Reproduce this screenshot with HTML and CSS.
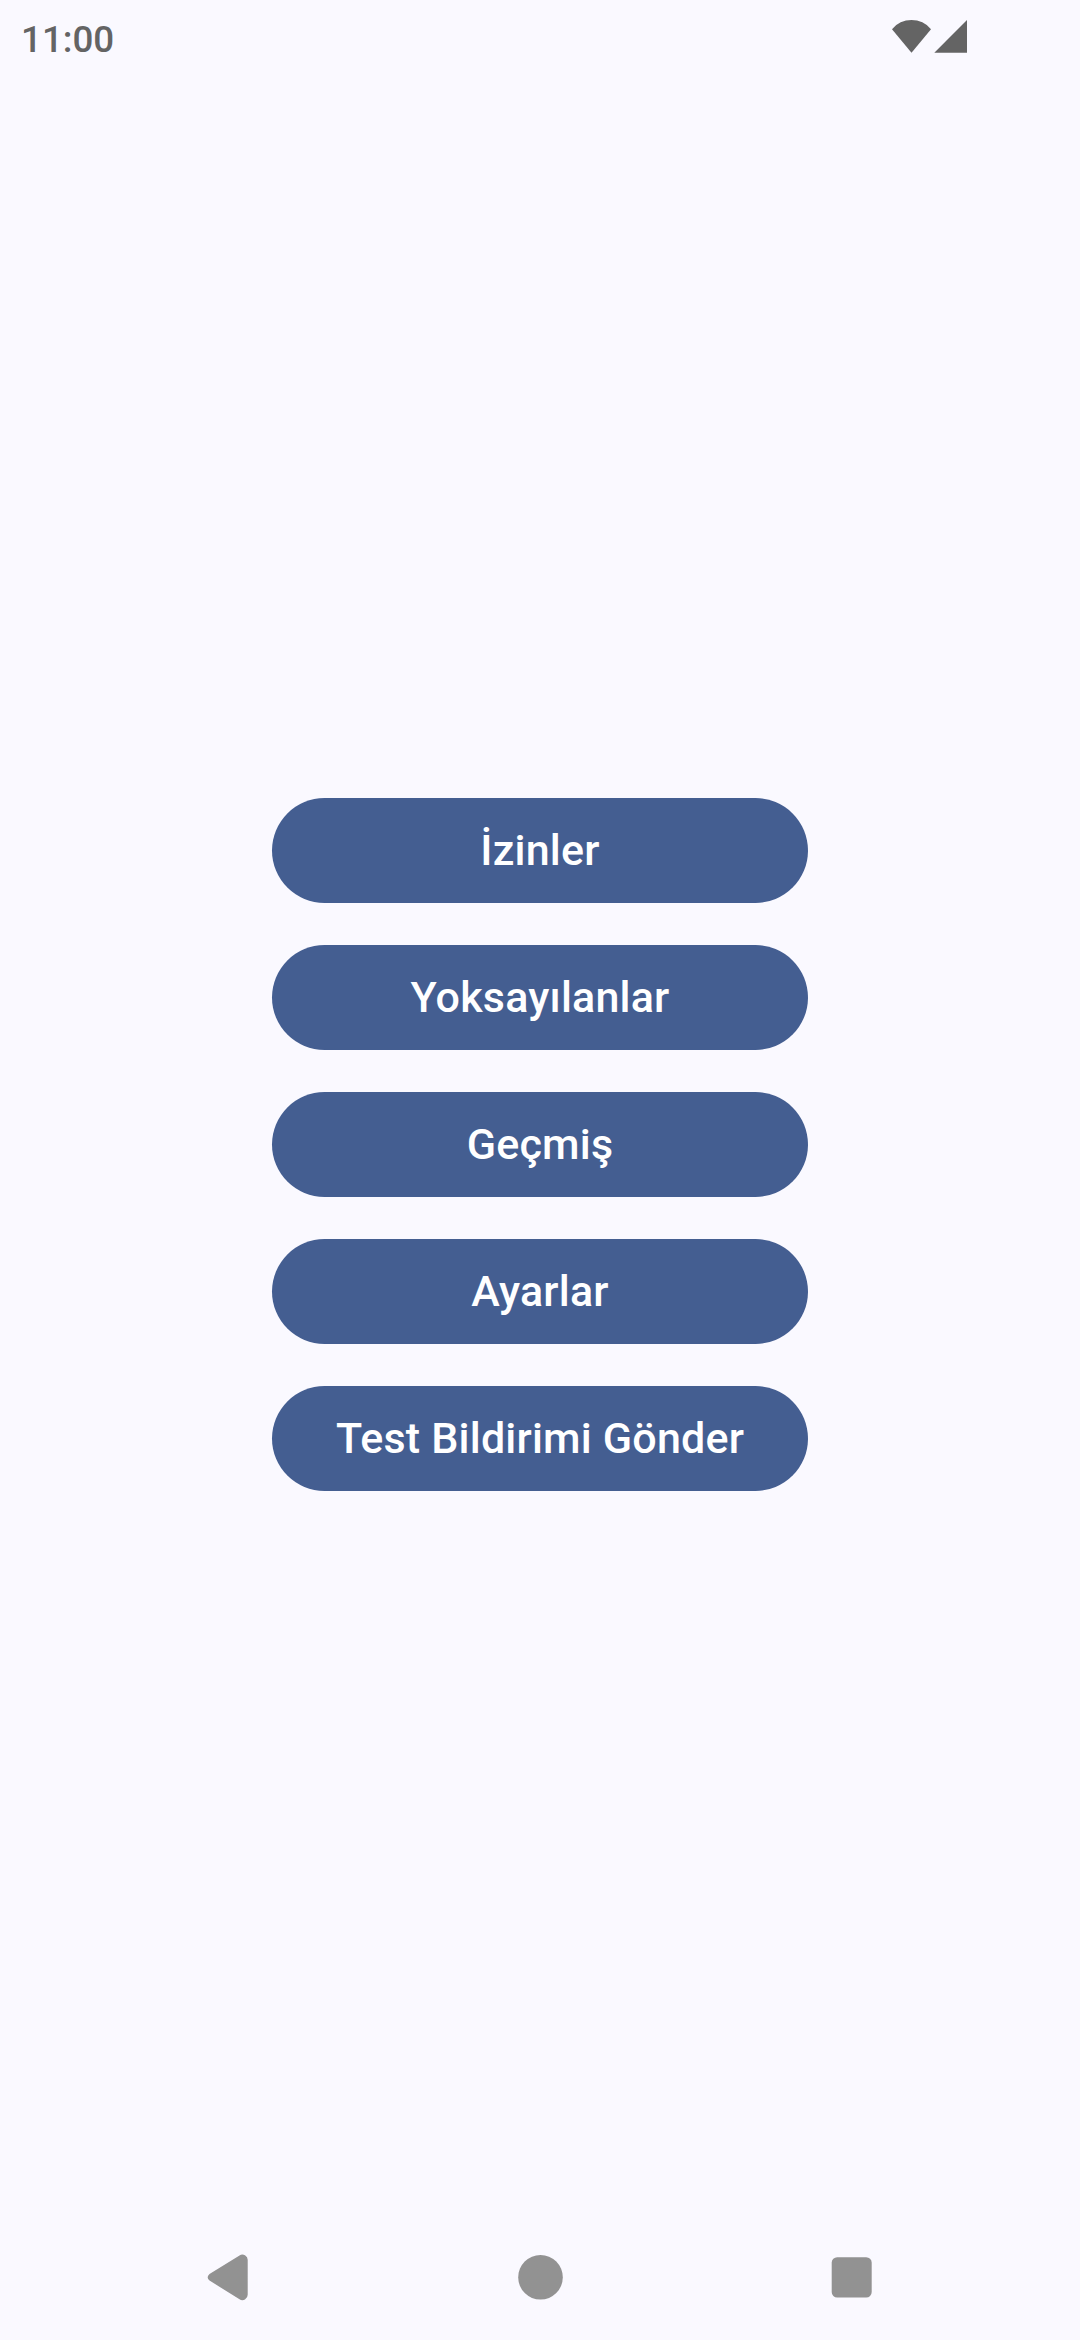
FILE: index.html
```html
<!DOCTYPE html>
<html lang="tr">
<head>
<meta charset="utf-8">
<title>Ana Menü</title>
<link rel="stylesheet" href="styles.css">
</head>
<body>
<div class="screen">
  <header class="status">
    <span class="clock">11:00</span>
    <svg class="signals" width="80" height="40" viewBox="0 0 80 40">
      <path d="M2 12.200A25.100 25.100 0 0 1 41 12.200L21.500 35.700Z"/>
      <path d="M77 3V35.700H44.300Z"/>
    </svg>
  </header>
  <main class="menu">
    <button class="item">İzinler</button>
    <button class="item">Yoksayılanlar</button>
    <button class="item">Geçmiş</button>
    <button class="item">Ayarlar</button>
    <button class="item">Test Bildirimi Gönder</button>
  </main>
  <nav class="navbar">
    <svg width="80" height="80" viewBox="0 0 80 80"><path d="M19.500 34Q15.800 37.300 19.500 40.600L49.500 59.200A5.300 5.300 0 0 0 57.700 54.700V20A5.300 5.300 0 0 0 49.500 15.400Z"/></svg>
    <svg width="80" height="80" viewBox="0 0 80 80"><circle cx="40.500" cy="37.300" r="22.300"/></svg>
    <svg width="80" height="80" viewBox="0 0 80 80"><rect x="21.700" y="17.200" width="40" height="40.300" rx="5.500"/></svg>
  </nav>
</div>
</body>
</html>
```
FILE: styles.css
```css
body {
  margin: 0;
  background: #faf9ff;
}

.screen {
  width: 1080px;
  height: 2340px;
  display: flex;
  flex-direction: column;
  font-family: Roboto, sans-serif;
  overflow: hidden;
}

.status {
  height: 74px;
  box-sizing: border-box;
  padding: 17px 110px 0 21px;
  display: flex;
  justify-content: space-between;
  color: #646464;
}

.clock {
  font-size: 36.75px;
  line-height: 45px;
  font-weight: 500;
}

.signals {
  fill: #646464;
}

.menu {
  flex: 1;
  display: flex;
  flex-direction: column;
  align-items: center;
  gap: 42px;
  padding-top: 724px;
}

.item {
  width: 536px;
  height: 105px;
  padding: 0 0 2px;
  border: 0;
  border-radius: 53px;
  background: #445e91;
  color: #fff;
  font: 500 43px/60px Roboto, sans-serif;
  letter-spacing: 0.2px;
}

.navbar {
  height: 100px;
  display: flex;
  justify-content: space-between;
  padding: 0 190px;
  fill: #929292;
}
```
